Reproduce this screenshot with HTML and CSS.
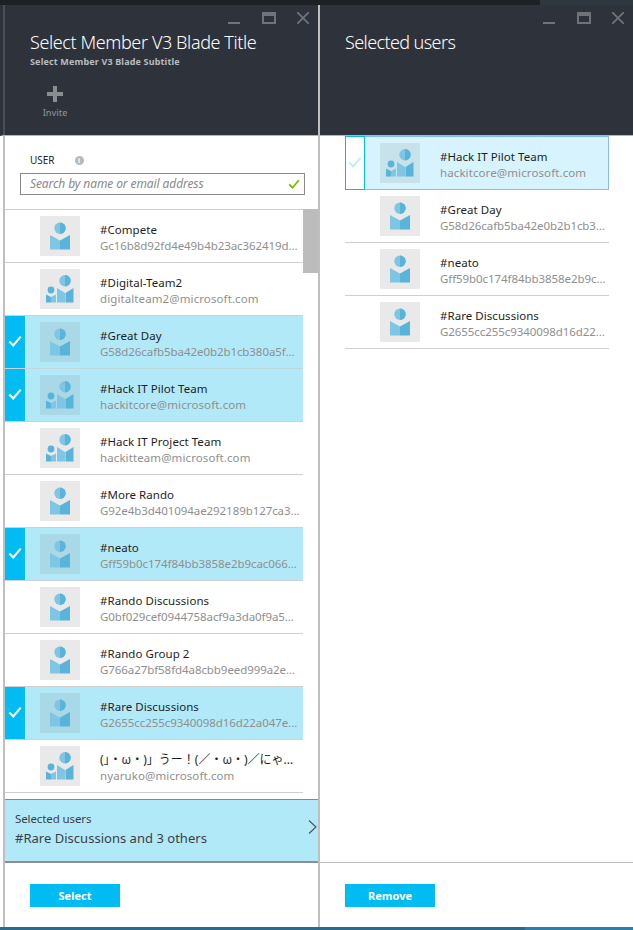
FILE: index.html
```html
<!DOCTYPE html>
<html lang="en">
<head>
<meta charset="utf-8">
<title>Select Member</title>
<link rel="stylesheet" href="styles.css">
</head>
<body>
<svg class="defs" width="0" height="0" aria-hidden="true">
  <symbol id="person" viewBox="0 0 40 40">
    <circle cx="20" cy="12.3" r="5.7" fill="#7fc6e4"/>
    <path d="M20 6.600a5.700 5.700 0 0 1 0 11.400z" fill="#59b4d9"/>
    <path d="M10 19l10 5.500V33.500H10z" fill="#7fc6e4"/>
    <path d="M30 19l-10 5.500V33.500h10z" fill="#59b4d9"/>
  </symbol>
  <symbol id="group" viewBox="0 0 40 40">
    <circle cx="25" cy="11.800" r="5.700" fill="#7fc6e4"/>
    <path d="M25 6.100a5.700 5.700 0 0 1 0 11.400z" fill="#59b4d9"/>
    <path d="M17 19l8 5v9.500h-8z" fill="#7fc6e4"/>
    <path d="M33.500 19l-8 5v9.500h8z" fill="#59b4d9"/>
    <circle cx="11" cy="21" r="3.400" fill="#59b4d9"/>
    <path d="M6 25.500l5 2.500v5.500H6z" fill="#59b4d9"/>
    <path d="M16 25.500l-5 2.500v5.500h5z" fill="#7fc6e4"/>
  </symbol>
  <symbol id="tick" viewBox="0 0 16 16">
    <path d="M1.500 8.500l4.500 4.500 8.500-10" fill="none" stroke="currentColor" stroke-width="2.400"/>
  </symbol>
</svg>
<div class="top-strip"><div class="top-strip-end"></div></div>
<main class="blades">
  <section class="blade blade-left">
    <header class="head">
      <div class="win">
        <span class="win-min"></span><span class="win-max"></span>
        <svg class="win-close" viewBox="0 0 12 12"><path d="M0 0l12 12M12 0L0 12" stroke="currentColor" stroke-width="1.800"/></svg>
      </div>
      <h1 class="title">Select Member V3 Blade Title</h1>
      <p class="subtitle">Select Member V3 Blade Subtitle</p>
      <div class="command">
        <svg class="plus" viewBox="0 0 16 16"><path d="M6 0h4v6h6v4h-6v6H6v-6H0V6h6z" fill="currentColor"/></svg>
        <span>Invite</span>
      </div>
    </header>
    <div class="search">
      <div class="search-label"><span>USER</span><i class="info">i</i></div>
      <div class="search-box">
        <span class="placeholder">Search by name or email address</span>
        <svg class="ok" viewBox="0 0 16 16"><use href="#tick"/></svg>
      </div>
    </div>
    <div class="list-wrap">
      <ul class="list">
        <li class="row"><span class="mark"></span><svg class="ava" viewBox="0 0 40 40"><use href="#person"/></svg><div class="txt"><b>#Compete</b><small class="hash">Gc16b8d92fd4e49b4b23ac362419d...</small></div></li>
        <li class="row"><span class="mark"></span><svg class="ava" viewBox="0 0 40 40"><use href="#group"/></svg><div class="txt"><b>#Digital-Team2</b><small>digitalteam2@microsoft.com</small></div></li>
        <li class="row on"><span class="mark"><svg viewBox="0 0 16 16"><use href="#tick"/></svg></span><svg class="ava" viewBox="0 0 40 40"><use href="#person"/></svg><div class="txt"><b>#Great Day</b><small class="hash">G58d26cafb5ba42e0b2b1cb380a5f...</small></div></li>
        <li class="row on"><span class="mark"><svg viewBox="0 0 16 16"><use href="#tick"/></svg></span><svg class="ava" viewBox="0 0 40 40"><use href="#group"/></svg><div class="txt"><b>#Hack IT Pilot Team</b><small>hackitcore@microsoft.com</small></div></li>
        <li class="row"><span class="mark"></span><svg class="ava" viewBox="0 0 40 40"><use href="#group"/></svg><div class="txt"><b>#Hack IT Project Team</b><small>hackitteam@microsoft.com</small></div></li>
        <li class="row"><span class="mark"></span><svg class="ava" viewBox="0 0 40 40"><use href="#person"/></svg><div class="txt"><b>#More Rando</b><small class="hash">G92e4b3d401094ae292189b127ca3...</small></div></li>
        <li class="row on"><span class="mark"><svg viewBox="0 0 16 16"><use href="#tick"/></svg></span><svg class="ava" viewBox="0 0 40 40"><use href="#person"/></svg><div class="txt"><b>#neato</b><small class="hash">Gff59b0c174f84bb3858e2b9cac066...</small></div></li>
        <li class="row"><span class="mark"></span><svg class="ava" viewBox="0 0 40 40"><use href="#person"/></svg><div class="txt"><b>#Rando Discussions</b><small class="hash">G0bf029cef0944758acf9a3da0f9a5...</small></div></li>
        <li class="row"><span class="mark"></span><svg class="ava" viewBox="0 0 40 40"><use href="#person"/></svg><div class="txt"><b>#Rando Group 2</b><small class="hash">G766a27bf58fd4a8cbb9eed999a2e...</small></div></li>
        <li class="row on"><span class="mark"><svg viewBox="0 0 16 16"><use href="#tick"/></svg></span><svg class="ava" viewBox="0 0 40 40"><use href="#person"/></svg><div class="txt"><b>#Rare Discussions</b><small class="hash">G2655cc255c9340098d16d22a047e...</small></div></li>
        <li class="row"><span class="mark"></span><svg class="ava" viewBox="0 0 40 40"><use href="#group"/></svg><div class="txt"><b class="cjk">(」・ω・)」うー！(／・ω・)／にゃ...</b><small>nyaruko@microsoft.com</small></div></li>
      </ul>
      <div class="scrollbar"></div>
    </div>
    <div class="summary">
      <div class="summary-text"><span>Selected users</span><strong>#Rare Discussions and 3 others</strong></div>
      <svg class="chev" viewBox="0 0 9 14"><path d="M1 .5l7 6.500-7 6.500" fill="none" stroke="currentColor" stroke-width="1.200"/></svg>
    </div>
    <footer class="foot"><button class="btn">Select</button></footer>
  </section>
  <section class="blade blade-right">
    <header class="head">
      <div class="win">
        <span class="win-min"></span><span class="win-max"></span>
        <svg class="win-close" viewBox="0 0 12 12"><path d="M0 0l12 12M12 0L0 12" stroke="currentColor" stroke-width="1.800"/></svg>
      </div>
      <h1 class="title">Selected users</h1>
    </header>
    <ul class="picked">
      <li class="row focus"><span class="mark"><svg viewBox="0 0 16 16"><use href="#tick"/></svg></span><svg class="ava" viewBox="0 0 40 40"><use href="#group"/></svg><div class="txt"><b>#Hack IT Pilot Team</b><small>hackitcore@microsoft.com</small></div></li>
      <li class="row"><span class="mark"></span><svg class="ava" viewBox="0 0 40 40"><use href="#person"/></svg><div class="txt"><b>#Great Day</b><small class="hash">G58d26cafb5ba42e0b2b1cb3...</small></div></li>
      <li class="row"><span class="mark"></span><svg class="ava" viewBox="0 0 40 40"><use href="#person"/></svg><div class="txt"><b>#neato</b><small class="hash">Gff59b0c174f84bb3858e2b9c...</small></div></li>
      <li class="row"><span class="mark"></span><svg class="ava" viewBox="0 0 40 40"><use href="#person"/></svg><div class="txt"><b>#Rare Discussions</b><small class="hash">G2655cc255c9340098d16d22...</small></div></li>
    </ul>
    <footer class="foot"><button class="btn">Remove</button></footer>
  </section>
</main>
<div class="bottom-strip"><div class="bottom-strip-end"></div></div>
</body>
</html>
```
FILE: styles.css
```css
* { box-sizing: border-box; }
html, body { margin: 0; padding: 0; height: 930px; overflow: hidden; background: #fff; }
body {
  display: flex;
  flex-direction: column;
  width: 633px;
  font-family: "Noto Sans", "Noto Sans CJK JP", sans-serif;
  color: #222;
}
.defs { position: absolute; }
.top-strip { height: 5px; flex: none; background: #1d2126; display: flex; justify-content: flex-end; }
.top-strip-end { width: 93px; background: #2e3640; }
.bottom-strip { height: 3px; flex: none; background: #2a6a8b; display: flex; justify-content: flex-end; }
.bottom-strip-end { width: 108px; background: #2f7ea8; }
.blades { flex: 1; display: flex; min-height: 0; }
.blade { display: flex; flex-direction: column; min-height: 0; }
.blade-left { width: 320px; padding-left: 5px; border-right: 2px solid #bfbfbf; position: relative; }
.blade-left::before { content: ""; position: absolute; left: 3px; top: 130px; bottom: 0; width: 2px; background: #bfbfbf; }
.blade-right { width: 313px; }

.head {
  height: 131px;
  flex: none;
  background: #2e323a;
  border-bottom: 1px solid #b5b5b5;
  padding: 24px 0 0 25px;
  position: relative;
  color: #fff;
}
.blade-left .head { margin-left: -5px; padding-left: 27px; border-left: 3px solid #2e323a; }
.blade-left .head::before { content: ""; position: absolute; left: 0; top: 0; bottom: 0; width: 2px; background: #4a4f57; }
.win { position: absolute; top: 7px; right: 9px; display: flex; align-items: center; color: #6f747b; }
.win-min { width: 12px; height: 2px; background: #6f747b; margin-top: 10px; margin-right: 22px; }
.win-max { width: 14px; height: 12px; border: 2px solid #6f747b; border-top-width: 4px; margin-right: 21px; }
.win-close { width: 12px; height: 12px; display: block; }
.title { margin: 0; font-size: 18px; line-height: 26px; font-weight: 300; letter-spacing: -.4px; }
.blade-right .title { letter-spacing: -.6px; }
.subtitle { margin: 1px 0 0; font-size: 9px; line-height: 12px; font-weight: 700; color: #b9bcc0; letter-spacing: .15px; }
.command { margin: 18px 0 0 12px; width: 26px; display: flex; flex-direction: column; align-items: center; color: #8a8d92; font-size: 9px; }
.plus { width: 16px; height: 16px; margin-bottom: 5px; }
.command span { line-height: 12px; font-weight: 500; }

.search { flex: none; height: 73px; padding: 17px 13px 0 15px; }
.search-label { display: flex; align-items: center; height: 14px; padding-left: 10px; font-size: 10px; color: #222; }
.info {
  width: 9px; height: 9px; border-radius: 50%; background: #b9b9b9; color: #fff;
  font: 700 7px/9px "Noto Sans", sans-serif; text-align: center; margin-left: 20px;
}
.search-box {
  height: 22px; margin-top: 6px; border: 1px solid #8a8a8a; padding: 0 4px 0 9px;
  display: flex; align-items: center; justify-content: space-between;
  font-size: 12px; font-style: italic; color: #8a8a8a; letter-spacing: -.1px;
}
.placeholder { margin-bottom: 2px; }
.ok { width: 12px; height: 12px; color: #7fba00; }

.list-wrap { flex: 1; min-height: 0; display: flex; }
.list { list-style: none; margin: 0; padding: 0; width: 298px; border-top: 1px solid #cfcfcf; }
.scrollbar { width: 15px; height: 64px; background: #bcbcbc; }
.row { height: 53px; display: flex; align-items: center; border-bottom: 1px solid #cfcfcf; }
.mark { width: 20px; height: 100%; flex: none; display: flex; align-items: center; justify-content: center; }
.mark svg { width: 14px; height: 14px; color: #fff; margin-bottom: 3px; }
.ava { width: 40px; height: 40px; flex: none; margin-left: 15px; background: #e9e9e9; }
.txt { margin-left: 20px; padding-top: 3px; min-width: 0; white-space: nowrap; display: flex; flex-direction: column; }
.txt b { font-weight: 400; font-size: 11.500px; line-height: 17px; color: #1e1e1e; letter-spacing: .05px; }
.txt small { margin-top: -1px; font-size: 11.500px; line-height: 17px; color: #8f8f8f; letter-spacing: .1px; }
.txt small.hash { letter-spacing: -.07px; }
.txt .cjk { font-size: 12px; letter-spacing: 0; }
.row.on { background: #b2e9f9; border-bottom-color: #c4d6dc; }
.row.on .mark { background: #00bcf2; }
.row.on .ava { background: #a9d8e6; }

.summary {
  flex: none; height: 64px; background: #b2e9f9;
  border-top: 1px solid #7f8a92; border-bottom: 2px solid #8a8f93;
  display: flex; align-items: center; justify-content: space-between; padding: 0 1px 0 10px;
  font-size: 13px; color: #3a3f45;
}
.summary-text { margin-bottom: 2px; }
.summary span { display: block; font-size: 11.500px; line-height: 17px; letter-spacing: -.1px; }
.summary strong { display: block; font-weight: 400; line-height: 23px; letter-spacing: .02px; }
.chev { width: 9px; height: 14px; color: #555; margin-bottom: 8px; }

.foot { flex: none; height: 64px; padding: 21px 0 0 25px; }
.btn {
  width: 90px; height: 23px; border: 0; padding: 0; background: #00bcf2; color: #fff;
  font: 700 11px/23px "Noto Sans", sans-serif; display: block;
}
.picked { list-style: none; margin: 0; padding: 0 0 0 25px; width: 289px; flex: 1; }
.picked .focus { height: 54px; background: #d7f4fe; border: 1px solid #8ab9ef; border-left: 0; }
.picked .focus .mark { background: #fff; border: 1px solid #00bcf2; height: 54px; }
.picked .focus .mark svg { color: #c5ecfa; }
.picked .focus .ava { background: #c8e2ea; }
.blade-right .foot { height: 65px; border-top: 1px solid #bfbfbf; }
```
